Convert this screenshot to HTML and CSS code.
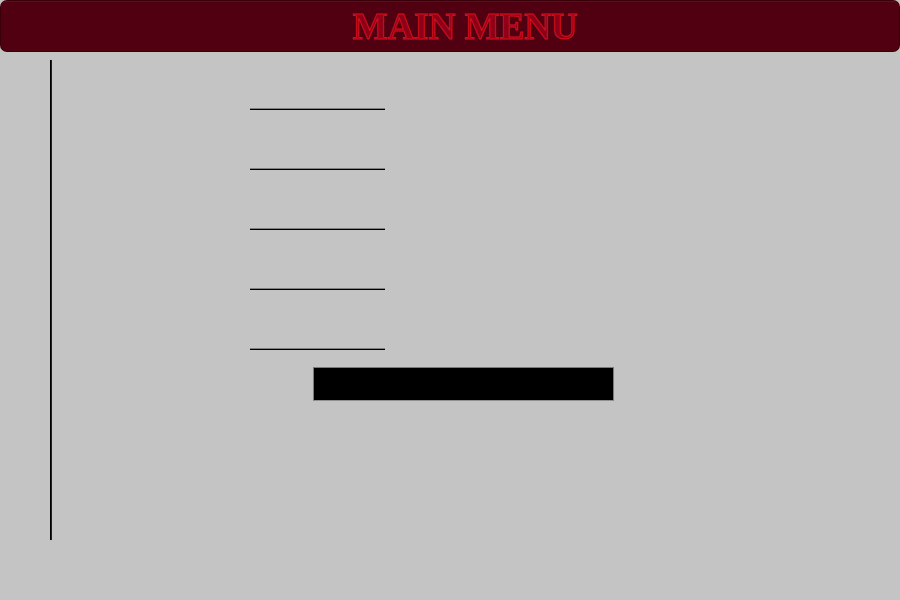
FILE: index.html
```html
<!DOCTYPE html>
<html>
<head>
<meta charset="utf-8">
<link rel="stylesheet" href="styles.css">
</head>
<body>
<header class="topbar"><h1 class="title">MAIN MENU</h1></header>
<main class="stage">
  <div class="vrule"></div>
  <div class="menu">
    <div class="hrule"></div>
    <div class="hrule"></div>
    <div class="hrule"></div>
    <div class="hrule"></div>
    <div class="hrule"></div>
    <div class="blackbox"></div>
  </div>
</main>
</body>
</html>
```
FILE: styles.css
```css
html, body {
  margin: 0;
  padding: 0;
  background: #c4c4c4;
  width: 900px;
  height: 600px;
  overflow: hidden;
}
.topbar {
  box-sizing: border-box;
  margin: 1px 1px 0 1px;
  height: 50px;
  background: #500010;
  border-top: 1px solid #7a0018;
  border-radius: 6px;
  box-shadow: 0 0 0 1px #3a000a;
  display: flex;
  align-items: center;
  justify-content: center;
  padding-left: 30px;
}
.title {
  margin: 0;
  font-family: "Liberation Serif", "Times New Roman", serif;
  font-weight: bold;
  font-size: 37px;
  line-height: 1;
  color: #8c0018;
  -webkit-text-stroke: 1px #d8101c;
  letter-spacing: 0;
}
.stage {
  display: flex;
  padding-top: 9px;
}
.vrule {
  margin-left: 50px;
  width: 1px;
  height: 480px;
  background: #000;
  border-right: 1px solid #222;
}
.menu {
  margin-left: 198px;
  padding-top: 48px;
  display: flex;
  flex-direction: column;
  align-items: flex-start;
}
.hrule {
  width: 135px;
  height: 0;
  border-top: 1px solid #808080;
  border-bottom: 1px solid #000;
  margin-bottom: 58px;
}
.hrule:nth-child(5) {
  margin-bottom: 17px;
}
.blackbox {
  box-sizing: border-box;
  margin-left: 63px;
  width: 301px;
  height: 34px;
  background: #000;
  border: 1px solid #7a7a7a;
  border-bottom-color: #909090;
}
```
